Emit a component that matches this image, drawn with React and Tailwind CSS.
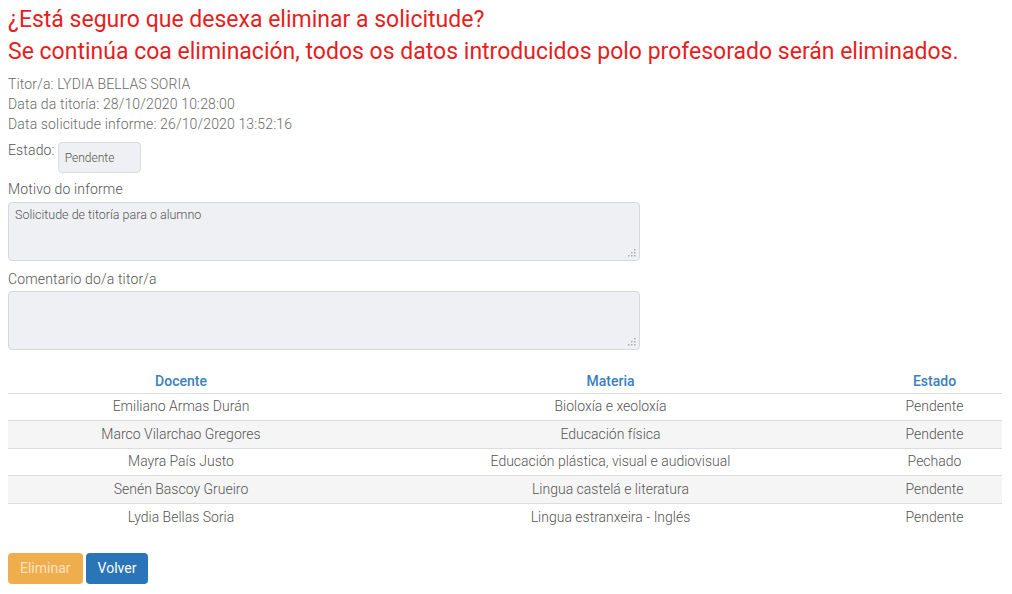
import React from "react";

const rows = [
  ["Emiliano Armas Durán", "Bioloxía e xeoloxía", "Pendente"],
  ["Marco Vilarchao Gregores", "Educación física", "Pendente"],
  ["Mayra País Justo", "Educación plástica, visual e audiovisual", "Pechado"],
  ["Senén Bascoy Grueiro", "Lingua castelá e literatura", "Pendente"],
  ["Lydia Bellas Soria", "Lingua estranxeira - Inglés", "Pendente"],
];

function Grip() {
  return (
    <svg className="absolute right-[3px] bottom-[3px]" width="8" height="8" viewBox="0 0 8 8">
      <rect x="6" y="0" width="1.5" height="1.5" fill="#aaa" />
      <rect x="6" y="3" width="1.5" height="1.5" fill="#aaa" />
      <rect x="3" y="3" width="1.5" height="1.5" fill="#aaa" />
      <rect x="6" y="6" width="1.5" height="1.5" fill="#aaa" />
      <rect x="3" y="6" width="1.5" height="1.5" fill="#aaa" />
      <rect x="0" y="6" width="1.5" height="1.5" fill="#aaa" />
    </svg>
  );
}

export default function App() {
  return (
    <div className="bg-white w-[1012px] h-[594px] px-[8px] text-[#6a6a6a] font-['Roboto',sans-serif] font-light text-[14px]">
      <h3 className="text-[#e61e1e] font-normal text-[23px] leading-[32px] pt-[4px]">
        ¿Está seguro que desexa eliminar a solicitude?
      </h3>
      <h3 className="text-[#e61e1e] font-normal text-[23px] leading-[32px]">
        Se continúa coa eliminación, todos os datos introducidos polo profesorado serán eliminados.
      </h3>
      <div className="mt-[6px] leading-[20px] tracking-[0.15px]">
        <div>Titor/a: LYDIA BELLAS SORIA</div>
        <div>Data da titoría: 28/10/2020 10:28:00</div>
        <div>Data solicitude informe: 26/10/2020 13:52:16</div>
      </div>
      <div className="flex items-start mt-[8px] gap-[3px]">
        <span className="text-[#555] leading-[14px] pt-[1px] tracking-[0.15px]">Estado:</span>
        <div className="w-[83px] h-[31px] bg-[#eef0f4] border border-[#d9dbe0] rounded-[4px] text-[12px] text-[#555] pl-[6px] flex items-center">
          Pendente
        </div>
      </div>
      <div className="mt-[9px] text-[#555] leading-[14px] tracking-[0.15px]">Motivo do informe</div>
      <div className="relative mt-[6px] w-[632px] h-[59px] bg-[#eef0f4] border border-[#d6d8dd] rounded-[4px] text-[12.5px] leading-[16px] text-[#555] px-[6px] pt-[4px]">
        Solicitude de titoría para o alumno
        <Grip />
      </div>
      <div className="mt-[11px] text-[#555] leading-[14px] tracking-[0.15px]">Comentario do/a titor/a</div>
      <div className="relative mt-[5px] w-[632px] h-[59px] bg-[#eef0f4] border border-[#d6d8dd] rounded-[4px]">
        <Grip />
      </div>
      <table className="mt-[20px] w-[994px] border-collapse text-center text-[14px]">
        <thead>
          <tr className="h-[23px] border-b border-[#ddd]">
            <th className="w-[346px] font-medium text-[#3a80c0]">Docente</th>
            <th className="w-[513px] font-medium text-[#3a80c0]">Materia</th>
            <th className="font-medium text-[#3a80c0]">Estado</th>
          </tr>
        </thead>
        <tbody>
          {rows.map((r, i) => (
            <tr key={i} className={`h-[27.5px] ${i < 4 ? "border-b border-[#ddd]" : ""} ${i % 2 === 1 ? "bg-[#f5f5f5]" : ""}`}>
              <td className="text-[#555]">{r[0]}</td>
              <td className="text-[#555]">{r[1]}</td>
              <td className="text-[#555]">{r[2]}</td>
            </tr>
          ))}
        </tbody>
      </table>
      <div className="flex gap-[3px] mt-[22px]">
        <button className="h-[31px] px-[12px] rounded-[4px] bg-[#f0ad4e] text-[#fbe3c0] font-normal text-[14px]">Eliminar</button>
        <button className="h-[31px] px-[12px] rounded-[4px] bg-[#2a74b8] text-white font-normal text-[14px]">Volver</button>
      </div>
    </div>
  );
}
